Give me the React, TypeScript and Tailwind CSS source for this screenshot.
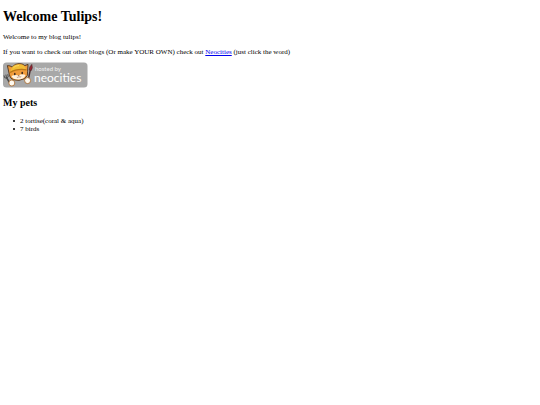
const pets = ['2 tortise(coral & aqua)', '7 birds'];

function NeocitiesBadge() {
  return (
    <svg
      viewBox="0 0 85 26"
      className="block h-[26px] w-[85px]"
      role="img"
      aria-label="Hosted by Neocities"
    >
      <rect x="0" y="0.5" width="84.5" height="25" rx="3.5" fill="#a8a8a8" />
      {/* fork */}
      <path d="M6.5 20.5 3.6 15.6" stroke="#4d4d4d" strokeWidth="1.5" strokeLinecap="round" />
      <path d="M1 13.4 1.7 15.8Q3.6 17 5.2 14.8L4.8 12.2M2.9 12.6 3.4 15.4" fill="none" stroke="#4d4d4d" strokeWidth="1" />
      {/* brush */}
      <path d="M25.4 17 27.3 8" stroke="#4a3030" strokeWidth="1.4" />
      <path d="M26.2 8Q26.2 4.6 28.8 2.4Q30.1 5.5 28.3 8.5Z" fill="#9a2434" stroke="#4a2020" strokeWidth="0.6" />
      {/* head */}
      <path
        d="M6.3 12.5 4.4 3.6Q7.2 3.6 9.2 5Q12 1.6 16.2 1.6Q19.6 1.6 21.8 3.6L25 2.4 24.6 9.3Q25.6 14 21.5 16.7Q16 19.4 10.5 17.8Q6.6 16.4 6.3 12.5Z"
        fill="#ef9b3b"
        stroke="#4b3320"
        strokeWidth="0.9"
      />
      <path d="M7.4 9.3Q8.7 2.3 16 2.2Q22 2.3 22.9 7Q15.4 5.9 7.4 9.3Z" fill="#f0bd35" />
      <path d="M6.7 10Q14 5.4 23.6 7.2L23.3 8.4Q14.2 6.8 7.4 11.1Z" fill="#b97816" />
      <path d="M10.5 5.6Q12.5 3.4 16 3.5" fill="none" stroke="#ffdc63" strokeWidth="0.9" />
      <path d="M8.4 14.1Q12 12.4 15.3 13.4Q19.2 11.4 22.6 13Q21.4 17 16 17.6Q10 17.9 8.4 14.1Z" fill="#fff2df" />
      <ellipse cx="11.8" cy="12" rx="0.8" ry="1.3" fill="#35251d" />
      <ellipse cx="19.2" cy="11" rx="0.8" ry="1.3" fill="#35251d" />
      <path d="M14.8 13.3 16.6 13 15.9 14.1Z" fill="#71402e" />
      <path d="M13.8 15.2Q15 16 15.9 14.6Q17 15.7 18.2 14.6" fill="none" stroke="#71402e" strokeWidth="0.5" />
      {/* paws */}
      <circle cx="8.8" cy="21" r="3" fill="#fffaf0" stroke="#a8682a" strokeWidth="0.8" />
      <circle cx="24.6" cy="18.6" r="3" fill="#fffaf0" stroke="#a8682a" strokeWidth="0.8" />
      <text x="32" y="9" fill="#f2f2f2" fontSize="6" className="font-[Lato,sans-serif]">
        hosted by
      </text>
      <text x="31" y="20" fill="#fff" fontSize="12" className="font-[Lato,sans-serif]">
        neocities
      </text>
    </svg>
  );
}

export default function App() {
  return (
    <main className="px-[3px] pt-[9px] font-['Liberation_Serif',serif] text-[7px] leading-[8px] text-black">
      <h1 className="mb-2 text-[14px] leading-[16px] font-bold">Welcome Tulips!</h1>
      <p className="mb-[7px]">Welcome to my blog tulips!</p>
      <p className="mb-[6px]">
        If you want to check out other blogs (Or make YOUR OWN) check out{' '}
        <a href="https://neocities.org" className="text-[#0000ee] underline">
          Neocities
        </a>{' '}
        (just click the word)
      </p>
      <a href="https://neocities.org" className="inline-block align-top">
        <NeocitiesBadge />
      </a>
      <h2 className="mt-[9px] mb-2 text-[10px] leading-[12px] font-bold">My pets</h2>
      <ul className="pl-[10px]">
        {pets.map((pet) => (
          <li
            key={pet}
            className="flex items-center gap-[5px] before:size-[2px] before:rounded-full before:bg-black"
          >
            {pet}
          </li>
        ))}
      </ul>
    </main>
  );
}
